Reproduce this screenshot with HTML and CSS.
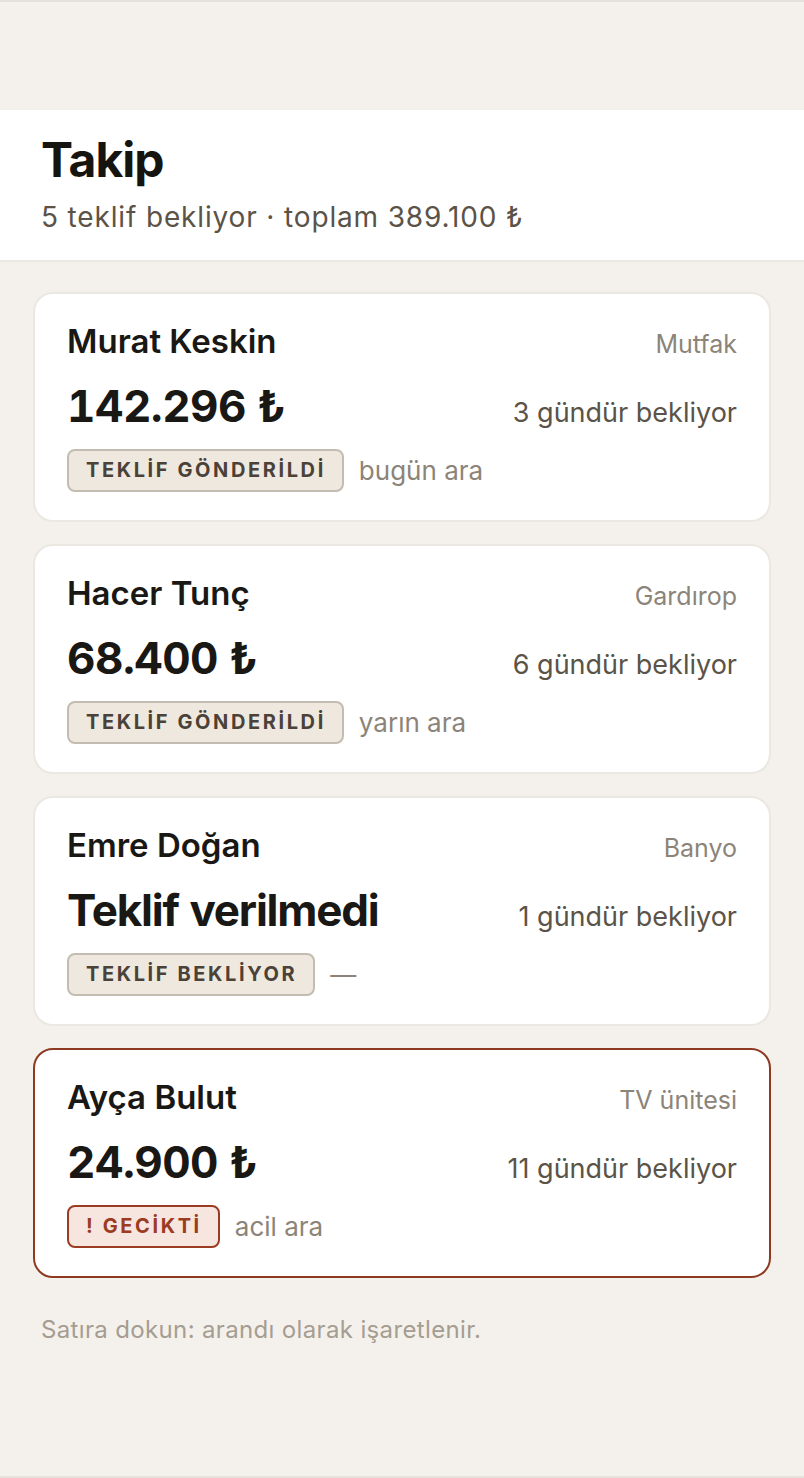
FILE: index.html
```html
<!DOCTYPE html>
<html lang="tr">
<head>
<meta charset="utf-8">
<title>Takip</title>
<link rel="stylesheet" href="styles.css">
</head>
<body>
<div class="screen">
  <div class="status-space"></div>
  <header class="header">
    <h1 class="title">Takip</h1>
    <p class="subtitle">5 teklif bekliyor · toplam 389.100 ₺</p>
  </header>
  <main class="list">
    <section class="card">
      <div class="row">
        <span class="name">Murat Keskin</span>
        <span class="category">Mutfak</span>
      </div>
      <div class="row row-amount">
        <span class="amount">142.296 ₺</span>
        <span class="waiting">3 gündür bekliyor</span>
      </div>
      <div class="row-status">
        <span class="badge">TEKLİF GÖNDERİLDİ</span>
        <span class="note">bugün ara</span>
      </div>
    </section>
    <section class="card">
      <div class="row">
        <span class="name">Hacer Tunç</span>
        <span class="category">Gardırop</span>
      </div>
      <div class="row row-amount">
        <span class="amount">68.400 ₺</span>
        <span class="waiting">6 gündür bekliyor</span>
      </div>
      <div class="row-status">
        <span class="badge">TEKLİF GÖNDERİLDİ</span>
        <span class="note">yarın ara</span>
      </div>
    </section>
    <section class="card">
      <div class="row">
        <span class="name">Emre Doğan</span>
        <span class="category">Banyo</span>
      </div>
      <div class="row row-amount">
        <span class="amount amount-empty">Teklif verilmedi</span>
        <span class="waiting">1 gündür bekliyor</span>
      </div>
      <div class="row-status">
        <span class="badge">TEKLİF BEKLİYOR</span>
        <span class="note">—</span>
      </div>
    </section>
    <section class="card card-late">
      <div class="row">
        <span class="name">Ayça Bulut</span>
        <span class="category">TV ünitesi</span>
      </div>
      <div class="row row-amount">
        <span class="amount">24.900 ₺</span>
        <span class="waiting">11 gündür bekliyor</span>
      </div>
      <div class="row-status">
        <span class="badge badge-late">! GECİKTİ</span>
        <span class="note">acil ara</span>
      </div>
    </section>
  </main>
  <p class="hint">Satıra dokun: arandı olarak işaretlenir.</p>
</div>
</body>
</html>
```
FILE: styles.css
```css
* { box-sizing: border-box; }
html, body { margin: 0; padding: 0; }
body {
  background: #f4f1ec;
  font-family: Inter, "Noto Sans", "Liberation Sans", sans-serif;
  color: #1c1a16;
}
.screen {
  min-height: 1478px;
  border-top: 2px solid #e6e2db;
  border-bottom: 2px solid #e6e2db;
  background: #f4f1ec;
}
.status-space { height: 108px; }
.header {
  background: #ffffff;
  border-bottom: 2px solid #ebe7e1;
  padding: 21px 41px 25px;
}
.title {
  margin: 0;
  font-size: 48px;
  line-height: 1.2;
  font-weight: 700;
  letter-spacing: -1px;
  color: #16140f;
}
.subtitle {
  margin: 10px 0 0;
  font-size: 28px;
  line-height: 1.3;
  letter-spacing: 0.85px;
  color: #5b5347;
}
.list {
  display: flex;
  flex-direction: column;
  gap: 22px;
  padding: 30px 33px 0;
}
.card {
  background: #ffffff;
  border: 2px solid #ebe7e1;
  border-radius: 20px;
  padding: 28px 32px;
  display: flex;
  flex-direction: column;
}
.card-late { border-color: #8e3a22; }
.row {
  display: flex;
  justify-content: space-between;
  align-items: baseline;
}
.row-amount { margin-top: 20px; }
.name {
  font-size: 33px;
  line-height: 38px;
  font-weight: 600;
  color: #1a1814;
}
.category {
  font-size: 25px;
  color: #8c8478;
}
.amount {
  font-size: 44px;
  line-height: 53px;
  font-weight: 700;
  letter-spacing: -0.5px;
  font-variant-numeric: tabular-nums;
  color: #1a1814;
}
.amount-empty { letter-spacing: -1.2px; }
.waiting {
  font-size: 27px;
  color: #5b5347;
}
.row-status {
  display: flex;
  align-items: center;
  gap: 15px;
  margin-top: 16px;
}
.badge {
  display: inline-flex;
  align-items: center;
  height: 43px;
  padding: 0 16px 0 17px;
  border: 2px solid #c3bcb0;
  border-radius: 8px;
  background: #efe8df;
  color: #4a4238;
  font-size: 20px;
  font-weight: 700;
  letter-spacing: 2.6px;
}
.badge-late {
  background: #f7e6df;
  border-color: #9b3b22;
  color: #9b3b22;
}
.note {
  font-size: 26px;
  color: #8c8478;
}
.hint {
  margin: 36px 41px 0;
  font-size: 24px;
  line-height: 1.3;
  letter-spacing: 0.35px;
  color: #a59d91;
}
```
